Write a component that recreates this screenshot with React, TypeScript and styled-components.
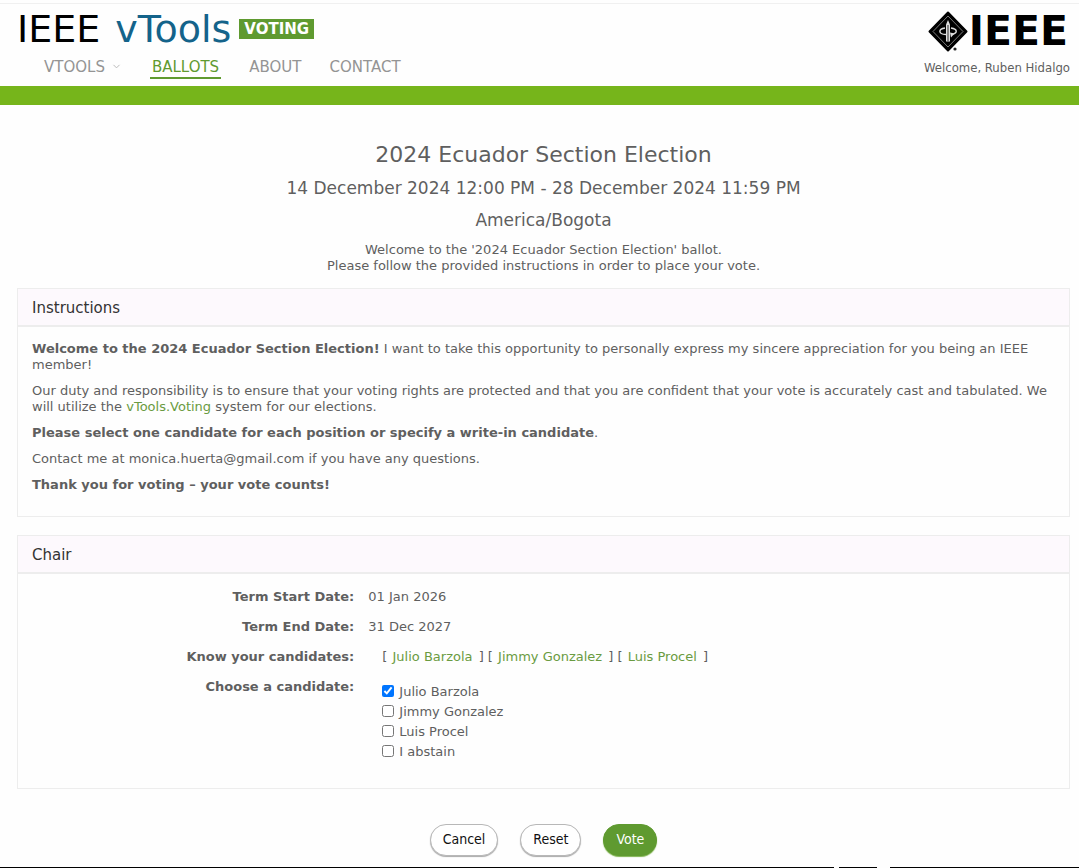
import React, { useState } from "react";
import styled, { createGlobalStyle } from "styled-components";
import { ChevronDown } from "lucide-react";

const colors = {
  text: "#5f5f5f",
  green: "#5f9a30",
  link: "#6a9b41",
  bar: "#76b51b",
  line: "#ededed",
};

const narrow = `"DejaVu Sans Condensed", Tahoma, sans-serif`;

const GlobalStyle = createGlobalStyle`
  * { box-sizing: border-box; }
  body {
    margin: 0;
    background: #fefefe;
    color: ${colors.text};
    font: 13px/16px Verdana, "DejaVu Sans", sans-serif;
  }
  h1, h2, p, dl, dd, ul { margin: 0; padding: 0; }
  a { color: ${colors.link}; text-decoration: none; }
`;

const Page = styled.div`
  display: flex;
  flex-direction: column;
  min-height: 100vh;
`;

const Header = styled.header`
  display: flex;
  justify-content: space-between;
  height: 102px;
  margin-top: 3px;
  padding: 6px 9px 0 17px;
  border-top: 1px solid #f0f0f0;
  border-bottom: 19px solid ${colors.bar};
`;

const Brand = styled.div`
  display: flex;
  align-items: center;
  height: 38px;
  font-size: 38px;
  line-height: 38px;
  color: #000;
`;

const BrandTools = styled.span`
  margin-left: 15px;
  color: #14638a;
`;

const Badge = styled.span`
  height: 20px;
  margin-left: 8px;
  padding: 0 5px;
  background: ${colors.green};
  color: #fff;
  font-size: 15px;
  font-weight: bold;
  line-height: 20px;
`;

const Nav = styled.nav`
  display: flex;
  gap: 28px;
  margin-top: 8px;
  padding-left: 27px;
`;

const NavLink = styled.a<{ $active?: boolean }>`
  display: flex;
  align-items: center;
  height: 23px;
  gap: 6px;
  padding: 0 ${(p) => (p.$active ? 2 : 0)}px;
  border-bottom: 2px solid ${(p) => (p.$active ? colors.green : "transparent")};
  color: ${(p) => (p.$active ? colors.green : "#949494")};
  font-size: 15px;
`;

const Account = styled.div`
  display: flex;
  flex-direction: column;
  align-items: flex-end;
`;

const Logo = styled.div`
  display: flex;
  align-items: center;
  height: 42px;
  padding-right: 2px;
  color: #000;
  font: bold 41px/42px "DejaVu Sans", sans-serif;
`;

const Welcome = styled.span`
  margin-top: 6px;
  font: 13px/20px ${narrow};
`;

const Main = styled.main`
  padding: 34px 9px 0 17px;
`;

const Intro = styled.section`
  display: flex;
  flex-direction: column;
  align-items: center;
  padding-bottom: 14px;
  text-align: center;
`;

const Title = styled.h1`
  font-size: 22px;
  font-weight: normal;
  line-height: 32px;
`;

const Subtitle = styled.p`
  padding-top: 2px;
  font-size: 17px;
  line-height: 30px;
`;

const Greeting = styled.p`
  padding-top: 7px;
`;

const Panel = styled.section`
  margin-bottom: 18px;
  border: 1px solid ${colors.line};
`;

const PanelTitle = styled.h2`
  padding: 2px 14px 0;
  border-bottom: 2px solid ${colors.line};
  background: #fdf9fd;
  color: #333;
  font-size: 15px;
  font-weight: normal;
  line-height: 34px;
`;

const Prose = styled.div`
  display: flex;
  flex-direction: column;
  gap: 10px;
  padding: 14px 14px 23px;
`;

const Details = styled.dl`
  display: grid;
  grid-template-columns: 32% 1fr;
  gap: 14px;
  padding: 15px 0 28px;
`;

const Term = styled.dt`
  font-weight: bold;
  text-align: right;
`;

const Candidates = styled.dd`
  padding-left: 14px;
`;

const CandidateLink = styled.a`
  padding: 0 2px 0 1px;
`;

const Choices = styled.ul`
  display: grid;
  gap: 4px;
  padding-top: 5px;
  list-style: none;
`;

const Choice = styled.label`
  display: flex;
  gap: 5px;
`;

const Checkbox = styled.input`
  width: 12px;
  height: 12px;
  margin: 1px 0 0;
`;

const Actions = styled.div`
  display: flex;
  justify-content: center;
  gap: 22px;
  padding: 17px 0 10px;
`;

const Button = styled.button<{ $primary?: boolean }>`
  height: 32px;
  padding: 0 12px 2px;
  border: 1px solid ${(p) => (p.$primary ? colors.green : "#b8b8b8")};
  border-radius: 16px;
  background: ${(p) => (p.$primary ? colors.green : "#fff")};
  box-shadow: 0 1px 1px ${(p) => (p.$primary ? "#7fb24f" : "#aaa")};
  color: ${(p) => (p.$primary ? "#fff" : "#111")};
  font: 14px/16px ${narrow};
`;

const Footer = styled.footer`
  display: flex;
  gap: 5px;
  height: 1px;
  margin-top: auto;
`;

const Rule = styled.span<{ $grow: number; $indent?: number }>`
  flex: ${(p) => p.$grow} 0 0;
  margin-left: ${(p) => p.$indent ?? 0}px;
  background: #000;
`;

const Emblem = () => (
  <svg width="41" height="41" viewBox="0 0 41 41" aria-hidden="true">
    <path d="M20 1.5 38.5 20.5 20 39.5 1.5 20.5Z" fill="#000" stroke="#000" strokeWidth="2" strokeLinejoin="round" />
    <path d="M20 5 35 20.5 20 36 5 20.5Z" fill="none" stroke="#999" strokeWidth="0.8" />
    <path d="m20 9 2 4.500v17h-4v-17Z" fill="#ddd" />
    <path d="M20 14v16" stroke="#000" strokeWidth="0.8" />
    <path d="M17 17c-7 1-7 6 1 6.500M23 17c7 1 7 5.500 0 6.500" fill="none" stroke="#ddd" strokeWidth="1.4" />
    <path d="m22 21.500 4.500 1-3.500 4Z" fill="#ddd" />
    <circle cx="27" cy="38" r="1.6" fill="#222" />
  </svg>
);

const people = ["Julio Barzola", "Jimmy Gonzalez", "Luis Procel"];
const options = [...people, "I abstain"];

export default function App() {
  const [chosen, setChosen] = useState<string[]>([people[0]]);
  const toggle = (name: string) =>
    setChosen((list) => (list.includes(name) ? list.filter((n) => n !== name) : [...list, name]));

  return (
    <Page>
      <GlobalStyle />
      <Header>
        <div>
          <Brand>
            IEEE<BrandTools>vTools</BrandTools>
            <Badge>VOTING</Badge>
          </Brand>
          <Nav>
            <NavLink href="#vtools">VTOOLS <ChevronDown size={11} color="#b5b5b5" /></NavLink>
            <NavLink href="#ballots" $active>BALLOTS</NavLink>
            <NavLink href="#about">ABOUT</NavLink>
            <NavLink href="#contact">CONTACT</NavLink>
          </Nav>
        </div>
        <Account>
          <Logo><Emblem />IEEE</Logo>
          <Welcome>Welcome, Ruben Hidalgo</Welcome>
        </Account>
      </Header>

      <Main>
        <Intro>
          <Title>2024 Ecuador Section Election</Title>
          <Subtitle>14 December 2024 12:00 PM - 28 December 2024 11:59 PM</Subtitle>
          <Subtitle>America/Bogota</Subtitle>
          <Greeting>
            Welcome to the '2024 Ecuador Section Election' ballot.
            <br />
            Please follow the provided instructions in order to place your vote.
          </Greeting>
        </Intro>

        <Panel>
          <PanelTitle>Instructions</PanelTitle>
          <Prose>
            <p>
              <strong>Welcome to the 2024 Ecuador Section Election!</strong> I want to take this opportunity to
              personally express my sincere appreciation for you being an IEEE member!
            </p>
            <p>
              Our duty and responsibility is to ensure that your voting rights are protected and that you are
              confident that your vote is accurately cast and tabulated. We will utilize the{" "}
              <a href="#voting">vTools.Voting</a> system for our elections.
            </p>
            <p><strong>Please select one candidate for each position or specify a write-in candidate</strong>.</p>
            <p>Contact me at monica.huerta@gmail.com if you have any questions.</p>
            <p><strong>Thank you for voting – your vote counts!</strong></p>
          </Prose>
        </Panel>

        <form onSubmit={(e) => e.preventDefault()}>
          <Panel>
            <PanelTitle>Chair</PanelTitle>
            <Details>
              <Term>Term Start Date:</Term>
              <dd>01 Jan 2026</dd>
              <Term>Term End Date:</Term>
              <dd>31 Dec 2027</dd>
              <Term>Know your candidates:</Term>
              <Candidates>
                {people.map((name) => (
                  <React.Fragment key={name}>[ <CandidateLink href="#candidate">{name}</CandidateLink> ] </React.Fragment>
                ))}
              </Candidates>
              <Term>Choose a candidate:</Term>
              <Candidates>
                <Choices>
                  {options.map((name) => (
                    <li key={name}>
                      <Choice>
                        <Checkbox type="checkbox" checked={chosen.includes(name)} onChange={() => toggle(name)} />
                        {name}
                      </Choice>
                    </li>
                  ))}
                </Choices>
              </Candidates>
            </Details>
          </Panel>
          <Actions>
            <Button type="button">Cancel</Button>
            <Button type="button" onClick={() => setChosen([])}>Reset</Button>
            <Button type="submit" $primary>Vote</Button>
          </Actions>
        </form>
      </Main>

      <Footer>
        <Rule $grow={834} />
        <Rule $grow={38} />
        <Rule $grow={189} $indent={8} />
      </Footer>
    </Page>
  );
}
